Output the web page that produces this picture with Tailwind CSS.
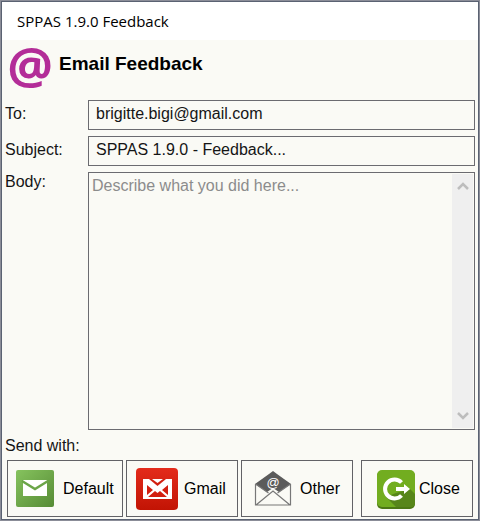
<!DOCTYPE html>
<html lang="en">
<head>
<meta charset="utf-8">
<title>SPPAS 1.9.0 Feedback</title>
<script src="https://cdn.jsdelivr.net/npm/@tailwindcss/browser@4"></script>
</head>
<body class="flex min-h-screen bg-[#8b8d98] pt-px pr-px pb-px pl-px font-['Liberation_Sans',Arial,sans-serif] text-base text-[#151515]">
<main class="flex grow flex-col border border-[#5a6272] bg-[#fafaf5]">
  <header class="flex h-[38px] items-center bg-white pl-[15px] font-['Open_Sans',sans-serif] text-[15px] text-black">SPPAS 1.9.0 Feedback</header>
  <form class="flex grow flex-col pt-1 pr-[3px] pb-0.5 pl-[3px]">
    <div class="mb-1 flex h-[52px] items-start gap-1.5">
      <svg class="size-12 shrink-0 overflow-visible" viewBox="0 0 48 48" aria-hidden="true"><text x="25" y="40" text-anchor="middle" font-family="Open Sans, sans-serif" font-weight="700" font-size="51" fill="#b32d98">@</text></svg>
      <h1 class="pt-2 text-[19px] leading-6 font-bold text-black">Email Feedback</h1>
    </div>
    <div class="grid grow grid-cols-[83px_1fr] grid-rows-[30px_30px_1fr] gap-y-1.5">
      <label for="to" class="pt-0.5 leading-6">To:</label>
      <input id="to" type="email" value="brigitte.bigi@gmail.com" class="min-w-0 border border-[#6b6b70] bg-transparent px-[7px] pb-0.5 outline-none">
      <label for="subject" class="pt-0.5 leading-6">Subject:</label>
      <input id="subject" type="text" value="SPPAS 1.9.0 - Feedback..." class="min-w-0 border border-[#6b6b70] bg-transparent px-[7px] pb-0.5 outline-none">
      <label for="body" class="leading-5">Body:</label>
      <div class="flex border border-[#6b6b70] p-px">
        <textarea id="body" placeholder="Describe what you did here..." class="min-w-0 grow resize-none overflow-hidden bg-transparent px-0.5 leading-6 outline-none placeholder:text-[#8c8c8c]"></textarea>
        <div class="flex w-[21px] flex-col items-center justify-between bg-[#efefef] py-2">
          <button type="button" aria-label="Scroll up"><svg class="block h-2 w-3" viewBox="0 0 12 8" fill="none" stroke="#bdbdbd" stroke-width="2.5"><path d="M1 7 6 2l5 5"/></svg></button>
          <button type="button" aria-label="Scroll down"><svg class="block h-2 w-3" viewBox="0 0 12 8" fill="none" stroke="#bdbdbd" stroke-width="2.5"><path d="m1 1 5 5 5-5"/></svg></button>
        </div>
      </div>
    </div>
    <p class="mt-1 mb-0.5 leading-6">Send with:</p>
    <div class="flex gap-[3px] pr-0.5 pl-0.5 text-black">
      <button type="button" class="flex h-[57px] w-[116px] items-center gap-2 border border-[#626266] pl-[7px]">
        <svg class="size-10" viewBox="0 0 40 40" aria-hidden="true">
          <defs><linearGradient id="leaf" x1="0" y1="0" x2="1" y2="1"><stop stop-color="#86c35e"/><stop offset="1" stop-color="#568b35"/></linearGradient></defs>
          <rect x="1" y="1" width="38" height="37" rx="2" fill="url(#leaf)"/>
          <path d="M8 11h24v16H8z" fill="#fff"/><path d="m7 12 13 8 13-8" fill="none" stroke="#6ba548" stroke-width="2.500"/>
        </svg>Default</button>
      <button type="button" class="flex h-[57px] w-[112px] items-center gap-1.5 border border-[#626266] pl-[9px]">
        <svg class="size-[42px]" viewBox="0 0 42 42" aria-hidden="true">
          <defs><linearGradient id="red" x1="0" y1="0" x2="0" y2="1"><stop stop-color="#e32b1b"/><stop offset="1" stop-color="#c21404"/></linearGradient></defs>
          <rect width="42" height="42" rx="4" fill="url(#red)"/>
          <path d="M7 11h29v20H7z" fill="#fff"/>
          <path d="M13 11l8.500 7L30 11z" fill="#d21f10"/>
          <path d="M16 11h11l-5.500 4z" fill="#fff"/>
          <path d="M11 17v10l6-5zM32 17v10l-6-5zM12 29l7-6 2.500 2 2.500-2 7 6z" fill="#d21f10"/>
        </svg>Gmail</button>
      <button type="button" class="flex h-[57px] w-[112px] items-center gap-2 border border-[#626266] pl-3">
        <svg class="size-[38px]" viewBox="0 0 38 38" aria-hidden="true">
          <path d="M1 14 15 4l4-3 4 3 14 10-12 8-6-4-6 4z" fill="#5b5b5b"/>
          <path d="M1.500 14v21h35V14M2 35l17-14 17 14M1.500 14l13 9M36.500 14l-13 9" fill="none" stroke="#777" stroke-width="1.200"/>
          <text x="19" y="17" text-anchor="middle" font-family="Liberation Sans, sans-serif" font-size="13" fill="#fff">@</text>
        </svg>Other</button>
      <button type="button" class="ml-auto flex h-[57px] w-[112px] items-center gap-[3px] border border-[#626266] pl-3.5">
        <svg class="size-10" viewBox="0 0 40 40" aria-hidden="true">
          <rect x="1" y="2" width="38" height="38" rx="5" fill="#4c7815"/>
          <rect x="1" y="1" width="38" height="37" rx="5" fill="#72ad20"/>
          <path d="m34 20 5 5v9q0 4-5 4H20L10 28l10-4z" fill="#57861a"/>
          <path d="M25.500 13.500a9.500 9.500 0 1 0 0 13" fill="none" stroke="#fff" stroke-width="4"/>
          <path d="M20 18h8v-3l6 5-6 5v-3h-8z" fill="#fff"/>
        </svg>Close</button>
    </div>
  </form>
</main>
</body>
</html>
